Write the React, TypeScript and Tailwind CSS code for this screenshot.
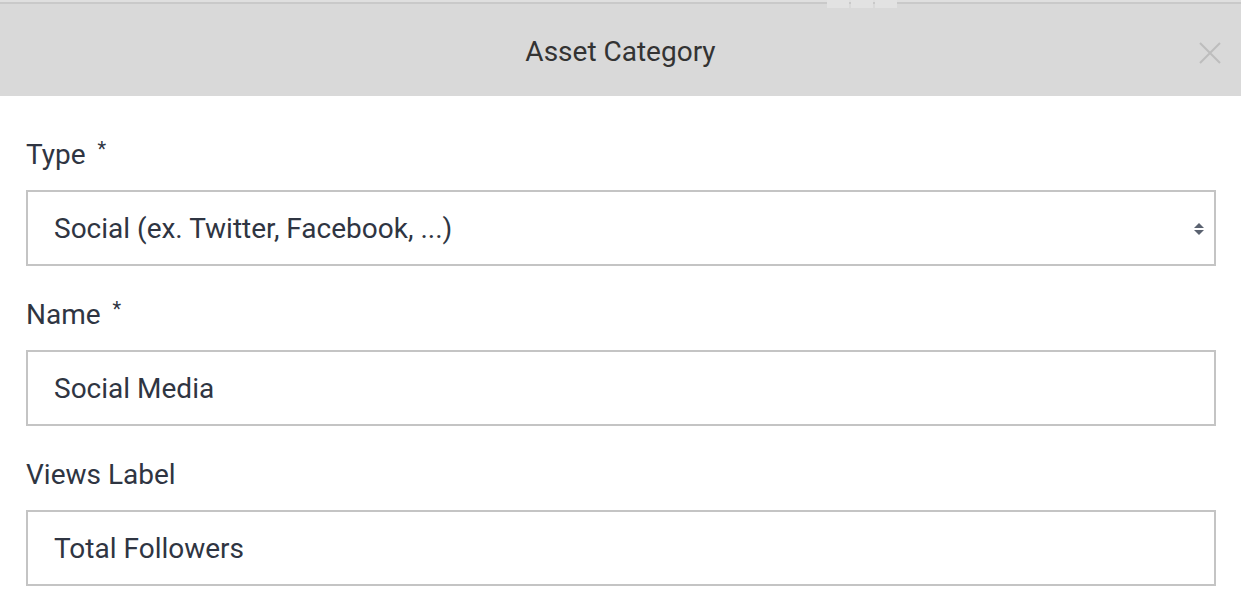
import type { ReactNode } from 'react';

function Field({ label, required, children }: { label: string; required?: boolean; children: ReactNode }) {
  return (
    <div className="flex flex-col">
      <label className="flex h-[40px] items-start text-[28px] leading-[40px] text-[#2f3542]">
        {label}
        {required && <span className="ml-[12px] text-[20px] leading-[28px]">*</span>}
      </label>
      <div className="mt-[15px]">{children}</div>
    </div>
  );
}

export default function App() {
  return (
    <div className="h-[610px] w-[1241px] overflow-hidden bg-white" style={{ fontFamily: 'Roboto, "Liberation Sans", sans-serif' }}>
      {/* Header */}
      <div className="relative h-[96px] bg-[#d9d9d9]">
        <div className="h-[2px] bg-[#dfdfdf]" />
        <div className="h-[2px] bg-[#c9c9c9]" />
        <div className="absolute left-[827px] top-0 flex h-[8px] gap-[2px]">
          <span className="h-[8px] w-[22px] bg-[#e2e2e2]" />
          <span className="h-[8px] w-[22px] bg-[#e2e2e2]" />
          <span className="h-[8px] w-[22px] bg-[#e2e2e2]" />
        </div>
        <div className="flex h-[92px] items-center justify-center pt-[4px]">
          <h2 className="text-[28px] text-[#333333]">Asset Category</h2>
        </div>
        <button className="absolute right-[20px] top-[42px] text-[#bdbdbd]" aria-label="Close">
          <svg width="22" height="22" viewBox="0 0 22 22" fill="none" stroke="currentColor" strokeWidth="2">
            <path d="M1 1l20 20M21 1L1 21" />
          </svg>
        </button>
      </div>

      {/* Form */}
      <div className="flex flex-col gap-[29px] pl-[26px] pr-[25px] pt-[39px]">
        <Field label="Type" required>
          <div className="flex h-[76px] items-center justify-between border-2 border-[#c4c4c4] pl-[26px] pr-[9px] pt-[2px] text-[28px] text-[#2f3542]">
            <span>Social (ex. Twitter, Facebook, ...)</span>
            <svg width="12" height="16" viewBox="0 0 12 16" fill="#5a6270">
              <path d="M6 2L11 7H1z" />
              <path d="M6 14L11 9H1z" />
            </svg>
          </div>
        </Field>
        <Field label="Name" required>
          <div className="flex h-[76px] items-center border-2 border-[#c4c4c4] pl-[26px] pt-[2px] text-[28px] text-[#2f3542]">
            Social Media
          </div>
        </Field>
        <Field label="Views Label">
          <div className="flex h-[76px] items-center border-2 border-[#c4c4c4] pl-[26px] pt-[2px] text-[28px] text-[#2f3542]">
            Total Followers
          </div>
        </Field>
      </div>
    </div>
  );
}
